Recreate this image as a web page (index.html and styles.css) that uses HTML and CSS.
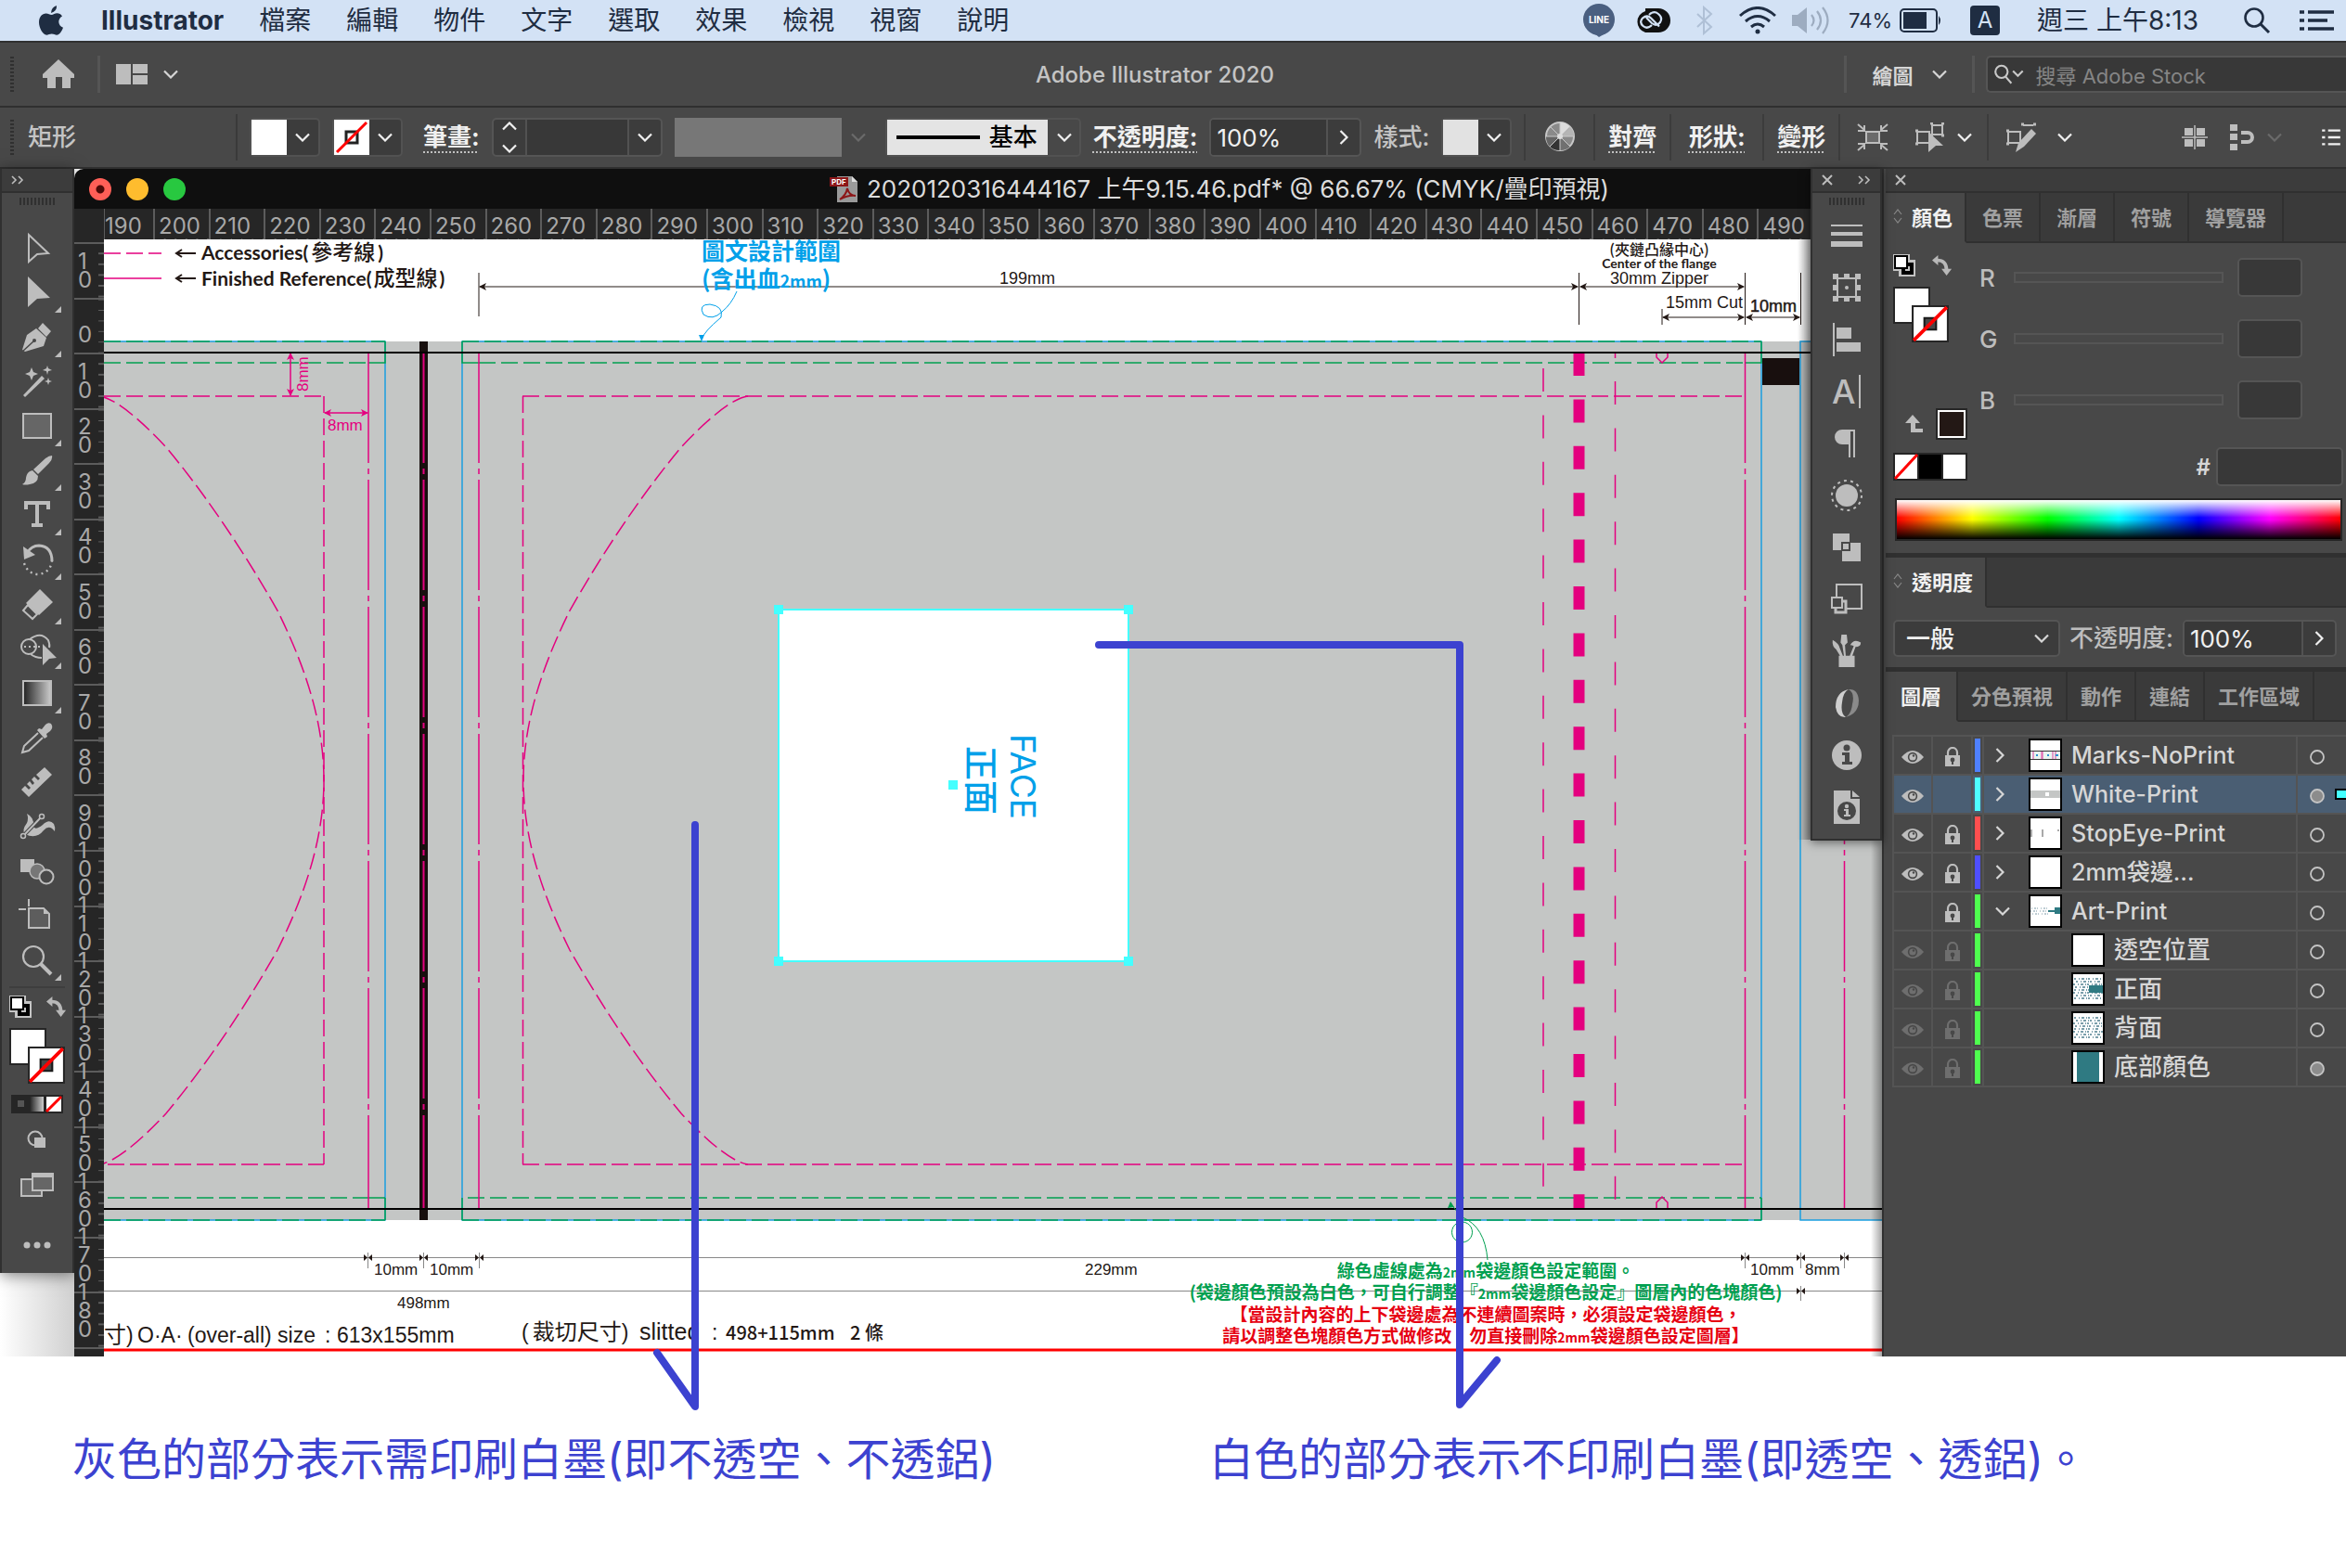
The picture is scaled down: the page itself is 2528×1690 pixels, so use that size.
FILE: index.html
```html
<!DOCTYPE html>
<html lang="zh-Hant">
<head>
  <meta charset="UTF-8">
  <title>Adobe Illustrator 2020</title>
  <link rel="stylesheet" href="styles.css">
</head>
<body>

<!-- shared icons -->
<svg class="defs" width="0" height="0" aria-hidden="true">
  <symbol id="chev" viewBox="0 0 16 10"><path d="M1 1.5l7 7 7-7" fill="none" stroke="currentColor" stroke-width="2.2"/></symbol>
  <symbol id="chev-up" viewBox="0 0 16 10"><path d="M1 8.5l7-7 7 7" fill="none" stroke="currentColor" stroke-width="2.2"/></symbol>
  <symbol id="chev-right" viewBox="0 0 10 16"><path d="M1.5 1l7 7-7 7" fill="none" stroke="currentColor" stroke-width="2.2"/></symbol>
  <symbol id="double" viewBox="0 0 14 10"><path d="M1 1l4 4-4 4M8 1l4 4-4 4" fill="none" stroke="currentColor" stroke-width="1.6"/></symbol>
  <symbol id="cross" viewBox="0 0 12 12"><path d="M1 1l10 10M11 1L1 11" fill="none" stroke="currentColor" stroke-width="2"/></symbol>
  <symbol id="updown" viewBox="0 0 10 18"><path d="M1 7l4-5 4 5M1 11l4 5 4-5" fill="none" stroke="currentColor" stroke-width="1.2"/></symbol>
  <symbol id="list" viewBox="0 0 24 22"><path d="M0 2h4M0 11h4M0 20h4M8 2h16M8 11h16M8 20h16" stroke="currentColor" stroke-width="3"/></symbol>
  <symbol id="eye" viewBox="0 0 24 16"><path d="M0 8Q12-6 24 8Q12 22 0 8z" fill="currentColor"/><circle cx="12" cy="8" r="5.2" fill="#484848"/><circle cx="12" cy="8" r="3.6" fill="currentColor"/><circle cx="13" cy="6.500" r="1.200" fill="#484848"/></symbol>
  <symbol id="lock" viewBox="0 0 18 22"><path d="M4 10V6a5 5 0 0 1 10 0v4" fill="none" stroke="currentColor" stroke-width="2.2"/><path d="M1 9h16v12H1z" fill="currentColor"/><circle cx="9" cy="14" r="2.4" fill="#484848"/><path d="M8 14h2v5H8z" fill="#484848"/></symbol>
  <symbol id="ring" viewBox="0 0 18 18"><circle cx="9" cy="9" r="7" fill="none" stroke="#c4c4c4" stroke-width="1.8"/></symbol>
  <symbol id="ring-full" viewBox="0 0 18 18"><circle cx="9" cy="9" r="7" fill="#8c8c8c" stroke="#c4c4c4" stroke-width="1.8"/></symbol>
  <symbol id="none" viewBox="0 0 38 38"><path d="M0 0h38v38H0z" fill="#262626"/><path d="M2 2h34v34H2z" fill="#fff"/><path d="M13 13h12v12H13z" fill="#484848" stroke="#1a1a1a" stroke-width="2"/><path d="M2 36L36 2" stroke="#f00" stroke-width="3.5"/></symbol>
  <symbol id="default-fill" viewBox="0 0 24 24"><path d="M0 0h18v6h6v18H6v-6H0z" fill="#c4c4c4"/><path d="M9 9h13v13H9z" fill="#000"/><path d="M13 13h5v5h-5z" fill="#c4c4c4"/><path d="M2 2h13v13H2z" fill="#fff" stroke="#000" stroke-width="2"/></symbol>
  <symbol id="swap" viewBox="0 0 24 24"><path d="M6 6q11 0 11 12" fill="none" stroke="#b8b8b8" stroke-width="4"/><path d="M0 6l7-6v12zM11 16h12l-6 8z" fill="#b8b8b8"/></symbol>
</svg>

<header class="menubar">
  <svg class="apple" viewBox="0 0 26 32"><path d="M19 0q.5 6-6 8 .2-6 6-8z" fill="#1f2d42"/><path d="M13.500 10c2-.1 3.500-1.700 6-1.700 2 0 4.400 1.200 5.500 3.200-5.500 3.200-4.500 10.200 1 12.200-1.400 4-4 8-6.800 8-2 0-3-1.200-5.400-1.200S10 31.700 8.200 31.700C4 31.700 0 23.700 0 18c0-6 3.500-9.600 7.500-9.600 2.500 0 4.300 1.600 6 1.600z" fill="#1f2d42"/></svg>
  <nav class="menus">
    <a class="app-name" href="#">Illustrator</a>
    <a href="#">檔案</a>
    <a href="#">編輯</a>
    <a href="#">物件</a>
    <a href="#">文字</a>
    <a href="#">選取</a>
    <a href="#">效果</a>
    <a href="#">檢視</a>
    <a href="#">視窗</a>
    <a href="#">說明</a>
  </nav>
  <div class="status">
    <span class="status-icon"><svg width="36" height="36" viewBox="0 0 36 36"><circle cx="18" cy="17" r="17" fill="#4a5f80"/><path d="M13 32h12l-7 4z" fill="#4a5f80"/><text x="18" y="21" text-anchor="middle" class="line-logo">LINE</text></svg></span>
    <span class="status-icon"><svg width="40" height="30" viewBox="0 0 40 30"><path d="M13 2h14a13 13 0 0 1 0 26H13A12 12 0 0 1 13 5z" fill="#111"/><g fill="none" stroke="#d3e2f5" stroke-width="2.200"><path d="M20 20q-5 5-9.500 1t-.5-8.500q5-4 9 0l9 9M17 9q5-5 10-1t2 9q-4 5-9 1l-6-6"/></g></svg></span>
    <span class="status-icon"><svg width="20" height="32" viewBox="0 0 20 32"><path d="M2 9l15 14-8 7V2l8 7L2 23" fill="none" stroke="#afc0d6" stroke-width="2"/></svg></span>
    <span class="status-icon"><svg width="42" height="30" viewBox="0 0 42 30" fill="none" stroke="#1f2d42" stroke-width="3"><path d="M2 10Q21-7 40 10M8 16q13-11 26 0M14 22q7-6 14 0"/><circle cx="21" cy="27" r="2.5" fill="#1f2d42" stroke="none"/></svg></span>
    <span class="status-icon"><svg width="42" height="30" viewBox="0 0 42 30"><path d="M1 9h6l10-8v28L7 21H1z" fill="#9dacc0"/><path d="M22 9q5 6 0 12M28 5q8 10 0 20M34 1q11 14 0 28" fill="none" stroke="#9dacc0" stroke-width="2.2"/></svg></span>
    <span class="battery">74%<svg width="46" height="26" viewBox="0 0 46 26"><rect x="1" y="1" width="39" height="24" rx="4" fill="none" stroke="#1f2d42" stroke-width="2"/><path d="M4 4h25v18H4z" fill="#1f2d42"/><path d="M42 8q4 5 0 10z" fill="#1f2d42"/></svg></span>
    <span class="input-source">A</span>
    <span class="clock">週三 上午8:13</span>
    <svg class="spotlight" width="30" height="30" viewBox="0 0 30 30"><circle cx="12" cy="12" r="9.5" fill="none" stroke="#1f2d42" stroke-width="2.6"/><path d="M19 19l9 9" stroke="#1f2d42" stroke-width="3"/></svg>
    <svg width="37" height="22" viewBox="0 0 37 22"><path d="M0 2h5M0 11h5M0 20h5M9 2h28M9 11h21M9 20h28" stroke="#1f2d42" stroke-width="3.5"/></svg>
  </div>
</header>

<div class="appbar">
  <span class="grip-v"></span>
  <button class="home" aria-label="Home"><svg width="36" height="32" viewBox="0 0 36 32"><path d="M18 0l17 16v4h-4v11h-9V19h-7v12H6V20H1v-4z" fill="#bdbdbd"/></svg></button>
  <button class="arrange" aria-label="Arrange"><svg width="34" height="22" viewBox="0 0 34 22" fill="#bdbdbd"><path d="M0 0h16v22H0zM18 0h16v10H18zM18 12h16v10H18z"/></svg><svg width="16" height="10"><use href="#chev"/></svg></button>
  <h1>Adobe Illustrator 2020</h1>
  <button class="workspace-switch">繪圖<svg width="16" height="10"><use href="#chev"/></svg></button>
  <label class="stock-search"><svg width="38" height="24" viewBox="0 0 38 24" fill="none" stroke="#c8c8c8" stroke-width="2.4"><circle cx="10" cy="9" r="7.5"/><path d="M15 15l7 8M24 8l6 6 6-6"/></svg><input type="text" placeholder="搜尋 Adobe Stock" aria-label="搜尋 Adobe Stock"></label>
</div>

<div class="controlbar">
  <div class="object-type"><span class="grip-v"></span>矩形</div>
  <div class="controls">
    <button class="swatch-drop" aria-label="Fill"><span class="chip white"></span><svg width="16" height="10"><use href="#chev"/></svg></button>
    <button class="swatch-drop" aria-label="Stroke"><svg class="chip" viewBox="0 0 38 38"><path d="M0 0h38v38H0z" fill="#fff"/><path d="M13 13h12v12H13z" fill="none" stroke="#222" stroke-width="3"/><path d="M3 35L35 3" stroke="#f00" stroke-width="3"/></svg><svg width="16" height="10"><use href="#chev"/></svg></button>
    <label class="link-label indent" for="stroke-weight">筆畫:</label>
    <div class="combo stroke-weight">
      <button class="stepper" aria-label="Step"><svg width="16" height="10"><use href="#chev-up"/></svg><svg width="16" height="10"><use href="#chev"/></svg></button>
      <input id="stroke-weight" type="text">
      <button aria-label="Weights"><svg width="16" height="10"><use href="#chev"/></svg></button>
    </div>
    <div class="width-profile"><span></span><svg width="16" height="10"><use href="#chev"/></svg></div>
    <button class="brush-drop"><span class="brush"><i></i>基本</span><svg width="16" height="10"><use href="#chev"/></svg></button>
    <label class="link-label" for="opacity">不透明度:</label>
    <div class="combo opacity">
      <input id="opacity" type="text" value="100%">
      <button aria-label="Opacity"><svg width="10" height="16"><use href="#chev-right"/></svg></button>
    </div>
    <span class="plain-label">樣式:</span>
    <button class="swatch-drop" aria-label="Style"><span class="chip grey"></span><svg width="16" height="10"><use href="#chev"/></svg></button>
  </div>
  <button class="cell wheel" aria-label="Recolor"><svg width="32" height="32" viewBox="0 0 32 32"><circle cx="16" cy="16" r="15" fill="#8a8a8a" stroke="#c8c8c8" stroke-width="2"/><path d="M16 16V1a15 15 0 0 1 11 5z" fill="#ddd"/><path d="M16 16L27 6a15 15 0 0 1 4 10z" fill="#b5b5b5"/><path d="M16 16L5 27a15 15 0 0 1-4-11z" fill="#666"/><path d="M16 16v15A15 15 0 0 1 5 27z" fill="#333"/><path d="M16 16L27 27a15 15 0 0 1-11 4z" fill="#707070"/><path d="M16 1v30M1 16h30M5 5l22 22M27 5L5 27" stroke="#c8c8c8" stroke-width="1"/><circle cx="16" cy="16" r="3" fill="#ddd"/></svg></button>
  <button class="cell link-label">對齊</button>
  <button class="cell link-label shape">形狀:</button>
  <button class="cell link-label">變形</button>
  <div class="cell icon-pair">
    <button aria-label="Isolate"><svg width="34" height="30" viewBox="0 0 34 30" fill="none" stroke="#bdbdbd" stroke-width="2"><path d="M10 9h14v12H10z" fill="#6a6a6a"/><path d="M1 1l7 6M33 1l-7 6M1 29l7-6M33 29l-7-6M1 8h7V2M33 8h-7V2M1 22h7v6M33 22h-7v6"/></svg></button>
    <button aria-label="Select similar"><svg width="34" height="32" viewBox="0 0 34 32" fill="none" stroke="#bdbdbd" stroke-width="2"><path d="M19 3h11v10H19zM3 10h13v12H3z"/><path d="M17 1h3M29 1h3M17 14h3M29 14h3M1 9h3M1 23h3" stroke-width="3"/><path d="M15 10l16 15h-8l-8 7z" fill="#bdbdbd" stroke="none"/></svg><svg width="16" height="10"><use href="#chev"/></svg></button>
  </div>
  <button class="edit-similar" aria-label="Edit similar"><svg width="34" height="32" viewBox="0 0 34 32" fill="none" stroke="#bdbdbd" stroke-width="2"><path d="M19 3h11M3 10h13v12H3z"/><path d="M17 2h3M30 2h3M1 9h3M1 23h3" stroke-width="3"/><path d="M28 7l5 5-13 14-9 6 3-10z" fill="#bdbdbd" stroke="none"/></svg><svg width="16" height="10"><use href="#chev"/></svg></button>
  <div class="right-tools">
    <button aria-label="Grid"><svg width="28" height="26" viewBox="0 0 28 26"><path d="M3 3h9v8H3zM16 3h9v8h-9zM3 15h9v8H3zM16 15h9v8h-9z" fill="#bdbdbd"/><path d="M14 0v26M0 13h28" stroke="#bdbdbd" stroke-width="1.5"/></svg></button>
    <button aria-label="Snap"><svg width="28" height="28" viewBox="0 0 28 28"><path d="M0 0h8v7H0zM0 10h8v7H0zM0 21h8v7H0z" fill="#bdbdbd"/><path d="M12 9h7a5 5 0 0 1 0 10h-7" fill="none" stroke="#bdbdbd" stroke-width="4"/></svg><svg class="dim" width="16" height="10"><use href="#chev"/></svg></button>
    <button aria-label="Options"><svg width="24" height="18"><use href="#list"/></svg></button>
  </div>
</div>

<main class="workspace">
  <aside class="tools-col">
    <div class="tools">
      <div class="panel-head"><svg width="14" height="10"><use href="#double"/></svg></div>
      <span class="grip-h"></span>
      <div class="tool-list">
        <button aria-label="Selection"><svg viewBox="0 0 40 36"><path d="M11 4l21 20-12 1-9 8z" fill="none" stroke="#bdbdbd" stroke-width="2"/></svg></button>
        <button class="more" aria-label="Direct selection"><svg viewBox="0 0 40 36"><path d="M10 1l24 23-14 1-10 9z" fill="#bdbdbd"/></svg></button>
        <button class="more" aria-label="Pen"><svg viewBox="0 0 40 36"><path d="M26 3l9 9-5 6-9-9zM19 9l11 10-3 9-20 6-3-2L9 16z" fill="#bdbdbd"/><path d="M4 34l12-11" stroke="#484848" stroke-width="1.5"/><circle cx="17" cy="22" r="2" fill="#484848"/></svg></button>
        <button aria-label="Magic wand"><svg viewBox="0 0 40 36"><path d="M5 33l2 2 21-20-3-3z" fill="#bdbdbd"/><path d="M14 3l2 5 5 2-5 2-2 5-2-5-5-2 5-2zM31 1l1 3 4 2-4 1-1 4-1-4-4-1 4-2zM32 14l1 3 3 1-3 1-1 3-1-3-3-1 3-1z" fill="#bdbdbd"/></svg></button>
        <button class="more" aria-label="Rectangle"><svg viewBox="0 0 40 36"><path d="M5 5h30v26H5z" fill="#666" stroke="#bdbdbd" stroke-width="2"/></svg></button>
        <button class="more" aria-label="Brush"><svg viewBox="0 0 40 36"><path d="M36 2q1 4-3 8L21 22l-5-5L29 5q4-3 7-3zM15 18l6 6q0 8-9 9-5 1-8 0 4-2 4-7 1-7 7-8z" fill="#bdbdbd"/></svg></button>
        <button class="more" aria-label="Type"><svg viewBox="0 0 40 36"><path d="M6 3h28v9h-4V7h-8v20h4v4H14v-4h4V7h-8v5H6z" fill="#bdbdbd"/></svg></button>
        <button class="more" aria-label="Rotate"><svg viewBox="0 0 40 36"><path d="M9 11Q14 3 22 3q14 1 14 17" fill="none" stroke="#bdbdbd" stroke-width="3"/><path d="M5 4l1 14 12-5z" fill="#bdbdbd"/><path d="M6 22q4 12 16 12 12-2 14-14" fill="none" stroke="#bdbdbd" stroke-width="2.4" stroke-dasharray="2 4"/></svg></button>
        <button class="more" aria-label="Eraser"><svg viewBox="0 0 40 36"><path d="M23 2l14 14-15 14L8 17z" fill="#bdbdbd"/><path d="M10 19l10 10-5 5-10-9z" fill="none" stroke="#bdbdbd" stroke-width="2"/></svg></button>
        <button class="more" aria-label="Shape builder"><svg viewBox="0 0 40 36" fill="none" stroke="#bdbdbd" stroke-width="2"><circle cx="11" cy="16" r="8"/><path d="M12 8q12-9 20 1 2 5 1 8M13 24q5 4 12 4"/><path d="M6 16h24" stroke-dasharray="2 3"/><path d="M26 13l15 15-8 1-7 7z" fill="#bdbdbd" stroke="none"/></svg></button>
        <button class="more" aria-label="Gradient"><svg viewBox="0 0 40 36"><defs><linearGradient id="gr"><stop offset="0" stop-color="#222"/><stop offset="1" stop-color="#ccc"/></linearGradient></defs><path d="M5 5h30v26H5z" fill="url(#gr)" stroke="#bdbdbd" stroke-width="2"/></svg></button>
        <button aria-label="Eyedropper"><svg viewBox="0 0 40 36"><path d="M35 3q3 4-1 8l-4 3 1 3-3 2-8-9 2-2 3 1 4-5q3-3 6-1z" fill="#bdbdbd"/><path d="M21 13L6 27l-2 7 7-2 15-14" fill="none" stroke="#bdbdbd" stroke-width="2"/></svg></button>
        <button aria-label="Measure"><svg viewBox="0 0 40 36"><path d="M28 2l8 8-25 24-8-8 4-4 4 4 2-2-4-4 3-3 3 4 2-2-3-4 3-3 4 4 2-2-4-4z" fill="#bdbdbd"/></svg></button>
        <button aria-label="Puppet"><svg viewBox="0 0 40 36"><path d="M9 4q8 4 7 13 1 6 10-1 7-7 12-1 2 4 1 8-6-8-12-1-8 10-20 4-4-4 2-12 2-5 0-10z" fill="#bdbdbd"/><path d="M5 28L25 7" stroke="#484848" stroke-width="4"/><path d="M5 28L25 7" stroke="#bdbdbd" stroke-width="2"/><circle cx="25" cy="7" r="2.5" fill="#484848" stroke="#bdbdbd" stroke-width="1.5"/><circle cx="5" cy="28" r="2.5" fill="#484848" stroke="#bdbdbd" stroke-width="1.5"/></svg></button>
        <button aria-label="Blend"><svg viewBox="0 0 40 36"><path d="M2 5h15v14H2z" fill="#bdbdbd"/><circle cx="20" cy="18" r="8" fill="#777" stroke="#bdbdbd" stroke-width="1.5"/><circle cx="30" cy="24" r="7.5" fill="#484848" stroke="#bdbdbd" stroke-width="2"/></svg></button>
        <button aria-label="Artboard"><svg viewBox="0 0 40 36"><path d="M11 0v8M0 11h8" stroke="#bdbdbd" stroke-width="2"/><path d="M11 10h16l6 6v15H11z" fill="#5d5d5d" stroke="#bdbdbd" stroke-width="2"/><path d="M27 10l6 6h-6z" fill="#bdbdbd"/></svg></button>
        <button class="more" aria-label="Zoom"><svg viewBox="0 0 40 36"><circle cx="16" cy="14" r="11" fill="none" stroke="#bdbdbd" stroke-width="2.2"/><path d="M24 22l11 11" stroke="#bdbdbd" stroke-width="4"/></svg></button>
      </div>
      <div class="fill-tools">
        <div class="swap-row"><svg width="24" height="24"><use href="#default-fill"/></svg><svg width="22" height="24"><use href="#swap"/></svg></div>
        <div class="fill-stroke"><span class="fill-box"></span><svg class="stroke-box"><use href="#none"/></svg></div>
        <svg class="color-modes" width="56" height="20" viewBox="0 0 56 20"><path d="M0 0h56v20H0z" fill="#262626"/><path d="M7 6h7v7H7z" fill="#555"/><path d="M20 2h15v16H20z" fill="url(#gr)"/><path d="M38 2h16v16H38z" fill="#fff"/><path d="M38 18L54 2" stroke="#f00" stroke-width="3"/></svg>
        <button aria-label="Draw mode"><svg width="22" height="20" viewBox="0 0 22 20"><circle cx="9" cy="9" r="7.5" fill="none" stroke="#bdbdbd" stroke-width="2"/><path d="M8 8h12v11H8z" fill="#bdbdbd"/></svg></button>
        <button class="screen" aria-label="Screen mode"><svg width="36" height="26" viewBox="0 0 36 26" fill="#666" stroke="#bdbdbd" stroke-width="2"><path d="M1 7h22v18H1z"/><path d="M13 1h22v18H13z"/><path d="M13 3h22" stroke-width="4"/></svg></button>
        <button class="dots" aria-label="Edit toolbar"><svg width="30" height="8" viewBox="0 0 30 8" fill="#bdbdbd"><circle cx="4" cy="4" r="3.5"/><circle cx="15" cy="4" r="3.5"/><circle cx="26" cy="4" r="3.5"/></svg></button>
      </div>
    </div>
  </aside>

  <section class="document">
    <div class="doc-title">
      <div class="lights"><i class="close"></i><i class="min"></i><i class="max"></i></div>
      <h2><svg width="30" height="28" viewBox="0 0 30 28"><path d="M8 0h16l6 6v22H8z" fill="#9a9a9a"/><path d="M24 0l6 6h-6z" fill="#ddd"/><path d="M0 1h20v10H0z" fill="#8c1618"/><text x="2" y="9" class="pdf-tag">PDF</text><path d="M11 25q7-5 8-12 2 8 9 8-8-1-17 4z" fill="none" stroke="#8c1618" stroke-width="2"/></svg>2020120316444167 上午9.15.46.pdf* @ 66.67% (CMYK/疊印預視)</h2>
    </div>
    <div class="ruler-row">
      <div class="ruler-corner"></div>
      <div class="ruler-x" id="ruler-x"></div>
    </div>
    <div class="canvas-row">
      <div class="ruler-y" id="ruler-y"></div>
      <svg class="canvas" viewBox="112 258 1916 1204">
        <defs>
          <linearGradient id="shade" x1="0" x2="1"><stop offset="0" stop-color="#000" stop-opacity="0"/><stop offset="1" stop-color="#000" stop-opacity=".35"/></linearGradient>
          <marker id="arr" viewBox="0 0 8 8" refX="7" refY="4" markerWidth="8" markerHeight="8" markerUnits="userSpaceOnUse" orient="auto-start-reverse"><path d="M0 0l8 4-8 4 2-4z" fill="context-stroke"/></marker>
          <path id="pouch" d="M806 427C790 429 764 450 734 482C690 535 650 595 614 658C590 707 564 770 564 841C564 912 590 975 614 1024C650 1087 690 1147 734 1200C764 1232 790 1253 806 1255"/>
        </defs>
        <rect x="112" y="258" width="1916" height="1204" fill="#fff"/>
        <rect x="112" y="368" width="1916" height="947" fill="#c4c6c5"/>

        <!-- legend -->
        <g class="pink">
          <path d="M112 273h62" stroke-dasharray="18 6"/>
          <path d="M112 300h62"/>
        </g>
        <g class="ink"><path d="M190 273h21M196 269l-6 4 6 4M190 300h21M196 296l-6 4 6 4" class="thick"/></g>
        <text class="futura" x="217" y="280">Accessories(<tspan class="cjk20" dx="3">參考線</tspan><tspan dx="3">)</tspan></text>
        <text class="futura" x="217" y="308">Finished Reference(<tspan class="cjk20" dx="2">成型線</tspan><tspan dx="2">)</tspan></text>

        <!-- bleed outlines -->
        <g class="blue">
          <path d="M112 368H415V1315H112M498 368H1898V1315H498zM2028 368H1940V1315H2028"/>
        </g>
        <g class="green">
          <path d="M112 368H415M498 368H1898M112 1315H415M498 1315H1898" stroke-dasharray="18 6"/>
          <path d="M112 391H397M516 391H1880M116 1291H397M504 1291H1898" stroke-dasharray="18 6"/>
          <path d="M397 391h18v-23M498 368v23h18M1880 391h18v-23M415 1291v24M1898 1291v24M498 1291v24M397 1291h18"/>
        </g>
        <path d="M452 368h9v947h-9z" fill="#180f0e"/>
        <path d="M1899 386h40v29h-40z" fill="#180f0e"/>

        <!-- fold and seal lines -->
        <g class="pink">
          <path d="M397 380V1302M516 380V1302M1880.5 380V1302M1987.5 380V1302" stroke-dasharray="119 6 6 6"/>
          <path d="M456.5 380V1302" stroke-width="2" stroke-dasharray="119 6 6 6"/>
          <path d="M349 427V1255M112 427H349M116 1255H349M563.5 427V1255M563 427H1880M563 1255H1880" stroke-dasharray="18 6"/>
          <use href="#pouch" stroke-dasharray="18 6"/>
          <use href="#pouch" transform="translate(913 0) scale(-1 1)" stroke-dasharray="18 6"/>
          <path d="M1701.5 380V1302" stroke-width="12" stroke-dasharray="25 25.4"/>
          <path d="M1663 397V1282" stroke-dasharray="25 25.4"/>
          <path d="M1740.5 380v6M1740.5 411V1295" stroke-dasharray="25 25.4"/>
          <path d="M1785 380v5l6 6 6-6v-5M1785 1302v-6l6-6 6 6v6"/>
          <path d="M313 381V426" marker-start="url(#arr)" marker-end="url(#arr)"/>
          <path d="M350 445H396" marker-start="url(#arr)" marker-end="url(#arr)"/>
        </g>
        <path d="M112 380H2028M112 1303H2028" stroke="#000" stroke-width="2"/>
        <text class="dim-pink" x="353" y="464">8mm</text>
        <text class="dim-pink" transform="translate(332 422) rotate(-90)">8mm</text>

        <!-- dimensions above -->
        <g class="ink">
          <path d="M516 294v47M1701.5 294v56M1880.5 294v56M1940.5 294v56M1791 333v17"/>
          <path d="M517 309H1700" marker-start="url(#arr)" marker-end="url(#arr)"/>
          <path d="M1703 309H1879" marker-start="url(#arr)" marker-end="url(#arr)"/>
          <path d="M1792 342H1879" marker-start="url(#arr)" marker-end="url(#arr)"/>
          <path d="M1882 342H1939" marker-start="url(#arr)" marker-end="url(#arr)"/>
        </g>
        <text class="dim-text" x="1077" y="306">199mm</text>
        <text class="dim-text" x="1735" y="306">30mm Zipper</text>
        <text class="dim-text" x="1795" y="332">15mm Cut</text>
        <text class="dim-text strong" x="1886" y="336">10mm</text>
        <text class="flange-cjk" x="1788" y="275" text-anchor="middle">(夾鏈凸緣中心)</text>
        <text class="flange" x="1788" y="289" text-anchor="middle">Center of the flange</text>

        <text class="bleed" x="756" y="280">圖文設計範圍</text>
        <text class="bleed" x="756" y="310">(含出血<tspan class="bleed-mm">2mm</tspan>)</text>
        <path class="curl-blue" d="M794 314Q788 328 778 336Q768 346 758 339Q752 328 765 328Q780 330 777 342Q758 358 756 366"/>
        <path d="M753 361h6l-3 7z" fill="#00a0e9"/>

        <!-- selected white area -->
        <rect x="839" y="657" width="377" height="379" fill="#fff" stroke="#44ffff" stroke-width="2"/>
        <path d="M834 652h10v10h-10zM1211 652h10v10h-10zM834 1031h10v10h-10zM1211 1031h10v10h-10zM1022 841h10v10h-10z" fill="#44ffff"/>
        <text class="face" transform="translate(1089 791) rotate(90)">FACE</text>
        <text class="face-cjk" transform="translate(1043 804) rotate(90)">正面</text>

        <!-- dimensions below -->
        <g class="ink">
          <path class="thin" d="M112 1355.5H2028M112 1391.5H2028M396.5 1350v17M456.5 1350v17M516.5 1350v17M1880.5 1350v17M1940.5 1350v17M1987.5 1350v17M1940.5 1386v16"/>
          <path class="solid" d="M392 1352l4 3.5-4 3.5zM401 1352l-4 3.5 4 3.5zM452 1352l4 3.5-4 3.5zM461 1352l-4 3.5 4 3.5zM512 1352l4 3.5-4 3.5zM521 1352l-4 3.5 4 3.5zM1876 1352l4 3.5-4 3.5zM1885 1352l-4 3.5 4 3.5zM1936 1352l4 3.5-4 3.5zM1945 1352l-4 3.5 4 3.5zM1983 1352l4 3.5-4 3.5zM1992 1352l-4 3.5 4 3.5zM1936 1388l4 3.5-4 3.5zM1945 1388l-4 3.5 4 3.5z"/>
        </g>
        <text class="dim-small" x="403" y="1374">10mm</text>
        <text class="dim-small" x="463" y="1374">10mm</text>
        <text class="dim-small" x="428" y="1410">498mm</text>
        <text class="dim-small" x="1169" y="1374">229mm</text>
        <text class="dim-small" x="1886" y="1374">10mm</text>
        <text class="dim-small" x="1945" y="1374">8mm</text>
        <text class="size-text" x="112" y="1447"><tspan class="cjk24">寸</tspan>)</text>
        <text class="size-text" x="148" y="1447">O·A·</text>
        <text class="size-text" x="202" y="1447">(over-all) size</text>
        <text class="size-text" x="350" y="1447">:</text>
        <text class="size-text" x="363" y="1447">613x155mm</text>
        <text class="size-text" x="562" y="1444">(<tspan class="cjk24" dx="4">裁切尺寸</tspan>)</text>
        <text class="slitted" x="689" y="1444">slitted</text>
        <text class="size-text" x="767" y="1444">:</text>
        <text class="slit-size" x="782" y="1444">498+115mm</text>
        <text class="slit-size" x="916" y="1444">2 條</text>

        <path class="curl-green" d="M1603 1358Q1600 1322 1576 1312Q1566 1302 1563 1296M1575 1317a11 11 0 1 0 1 0"/>
        <path d="M1560 1302l3-7 4 6z" fill="#00a050"/>
        <text class="hint green-text" x="1601" y="1377" text-anchor="middle">綠色虛線處為<tspan class="hint-mm">2mm</tspan>袋邊顏色設定範圍。</text>
        <text class="hint green-text" x="1601" y="1400" text-anchor="middle">(袋邊顏色預設為白色，可自行調整『<tspan class="hint-mm">2mm</tspan>袋邊顏色設定』圖層內的色塊顏色)</text>
        <text class="hint red-text" x="1601" y="1424" text-anchor="middle">【當設計內容的上下袋邊處為不連續圖案時，必須設定袋邊顏色，</text>
        <text class="hint red-text" x="1601" y="1447" text-anchor="middle">請以調整色塊顏色方式做修改　勿直接刪除<tspan class="hint-mm">2mm</tspan>袋邊顏色設定圖層】</text>
        <path d="M112 1455H2028" stroke="#f00" stroke-width="3"/>
        <rect x="1937" y="258" width="14" height="647" fill="url(#shade)"/>
        <rect x="2016" y="905" width="12" height="557" fill="url(#shade)"/>
      </svg>
    </div>

    <aside class="dock">
      <div class="panel-head"><svg width="12" height="12"><use href="#cross"/></svg><svg width="14" height="10"><use href="#double"/></svg></div>
      <span class="grip-h"></span>
      <button aria-label="Stroke"><svg viewBox="0 0 36 36"><path d="M1 14h34v4H1zM1 24h34v6H1zM1 6h34v2H1z" fill="#bdbdbd"/></svg></button>
      <button aria-label="Transform"><svg viewBox="0 0 36 36"><path d="M8 8h20v20H8z" fill="none" stroke="#bdbdbd" stroke-width="2"/><path d="M3 3h6v6H3zM15 3h6v6h-6zM27 3h6v6h-6zM3 15h6v6H3zM27 15h6v6h-6zM3 27h6v6H3zM15 27h6v6h-6zM27 27h6v6h-6z" fill="#bdbdbd"/><circle cx="18" cy="18" r="2" fill="#bdbdbd"/></svg></button>
      <button aria-label="Align"><svg viewBox="0 0 36 36" fill="#bdbdbd"><path d="M3 0h2v36H3zM7 5h16v12H7zM7 21h26v10H7z"/></svg></button>
      <button aria-label="Character"><svg viewBox="0 0 36 36"><text x="2" y="31" class="glyph-a">A</text><path d="M32 0v36" stroke="#bdbdbd" stroke-width="2"/></svg></button>
      <button aria-label="Paragraph"><svg viewBox="0 0 36 36"><path d="M27 3v30h-2V5h-3v28h-2V19h-7a8 8 0 0 1 0-16z" fill="#bdbdbd"/></svg></button>
      <button aria-label="Appearance"><svg viewBox="0 0 36 36"><circle cx="18" cy="18" r="12" fill="#bdbdbd"/><circle cx="18" cy="18" r="16" fill="none" stroke="#bdbdbd" stroke-width="2" stroke-dasharray="3 4.18"/></svg></button>
      <button aria-label="Pathfinder"><svg viewBox="0 0 36 36"><path d="M3 3h18v18H3zM13 13h20v20H13z" fill="#bdbdbd"/><path d="M13 13h8v8h-8z" fill="#bdbdbd" stroke="#484848" stroke-width="2"/></svg></button>
      <button aria-label="Asset export"><svg viewBox="0 0 36 36" fill="none" stroke="#bdbdbd" stroke-width="2"><path d="M7 16V2h27v26H18"/><path d="M2 16h11v11H2z"/><path d="M13 20h4v12H6v-5" stroke-width="3"/></svg></button>
      <button aria-label="Brushes"><svg viewBox="0 0 36 38" fill="#bdbdbd"><path d="M9 24h18v13H9zM12 0h6l1 9-3 3 1 13h-2l-2-13-2-3zM2 6q7 4 8 9l4 10h-3l-5-8q-5-4-4-11zM21 25l5-12q-2-1-4-1 4-8 12-3 0 5-6 5l-4 11z"/></svg></button>
      <button aria-label="Opacity"><svg viewBox="0 0 36 36"><path d="M20 3Q6 6 6 22q2 12 11 11-6-4-4-16Q14 6 20 3z" fill="#cfcfcf"/><path d="M17 33q14-4 14-18Q30 2 20 3q7 4 4 16-1 10-7 14z" fill="#8a8a8a"/></svg></button>
      <button aria-label="Info"><svg viewBox="0 0 36 36"><circle cx="18" cy="18" r="16" fill="#bdbdbd"/><circle cx="18" cy="10" r="3.5" fill="#484848"/><path d="M13 15h8v10h3v3H13v-3h3v-7h-3z" fill="#484848"/></svg></button>
      <button aria-label="Document info"><svg viewBox="0 0 36 36"><path d="M4 0h18v9h10v27H4z" fill="#bdbdbd"/><path d="M24 0l8 7h-8z" fill="#bdbdbd"/><circle cx="18" cy="22" r="10" fill="#484848"/><circle cx="18" cy="17" r="2.2" fill="#bdbdbd"/><path d="M15 20h5v6h2v2h-7v-2h2v-4h-2z" fill="#bdbdbd"/></svg></button>
    </aside>
  </section>

  <aside class="panels">
    <div class="panel-head"><svg width="12" height="12"><use href="#cross"/></svg></div>

    <section class="panel color-panel">
      <div class="tabs">
        <button class="active"><svg width="10" height="18"><use href="#updown"/></svg>顏色</button>
        <button>色票</button><button>漸層</button><button>符號</button><button>導覽器</button>
      </div>
      <div class="color-body">
        <div class="color-left">
          <div class="swap-row"><svg width="24" height="24"><use href="#default-fill"/></svg><svg width="22" height="24"><use href="#swap"/></svg></div>
          <div class="fill-stroke"><span class="fill-box"></span><svg class="stroke-box"><use href="#none"/></svg></div>
          <div class="last-color"><svg width="20" height="20" viewBox="0 0 20 20"><path d="M8 0l8 9H11v6h8v4H6V9H0z" fill="#bdbdbd"/></svg><span></span></div>
        </div>
        <div class="sliders">
          <label for="r">R</label><input type="range" id="r" disabled><input type="text" aria-label="R value">
          <label for="g">G</label><input type="range" id="g" disabled><input type="text" aria-label="G value">
          <label for="b">B</label><input type="range" id="b" disabled><input type="text" aria-label="B value">
        </div>
      </div>
      <div class="hex-row">
        <svg width="80" height="30" viewBox="0 0 80 30"><path d="M0 0h80v30H0z" fill="#262626"/><path d="M2 2h24v26H2zM54 2h24v26H54z" fill="#fff"/><path d="M28 2h24v26H28z" fill="#000"/><path d="M2 28L26 2" stroke="#f00" stroke-width="3"/></svg>
        <label for="hex">#</label><input type="text" id="hex">
      </div>
      <div class="spectrum"></div>
    </section>

    <section class="panel">
      <div class="tabs">
        <button class="active"><svg width="10" height="18"><use href="#updown"/></svg>透明度</button>
      </div>
      <div class="blend-row">
        <div class="select-wrap"><select aria-label="Blend mode"><option>一般</option></select><svg width="16" height="10"><use href="#chev"/></svg></div>
        <label for="opacity2">不透明度:</label>
        <div class="combo"><input id="opacity2" type="text" value="100%"><button aria-label="Opacity"><svg width="10" height="16"><use href="#chev-right"/></svg></button></div>
      </div>
    </section>

    <section class="panel layers-panel">
      <div class="tabs tight">
        <button class="active">圖層</button><button>分色預視</button><button>動作</button><button>連結</button><button>工作區域</button>
      </div>
      <table class="layers">
        <tr>
          <td><svg class="eye"><use href="#eye"/></svg></td><td><svg class="lock"><use href="#lock"/></svg></td><td class="bar blue-bar"></td>
          <td><div class="layer-name"><svg width="10" height="16"><use href="#chev-right"/></svg><svg class="thumb" viewBox="0 0 32 32"><path d="M0 12h32v9H0z" fill="#e8f5f0"/><path d="M0 11.5h32M0 20.5h32" stroke="#333"/><path d="M3 12v8M12 12v8M13 12v8M24 12v8M27 12v8" stroke="#e040a0"/><path d="M6 16h2M18 16h2M27 16h3" stroke="#2a90d0" stroke-width="2"/></svg>Marks-NoPrint</div></td>
          <td><svg class="ring"><use href="#ring"/></svg></td>
        </tr>
        <tr class="selected">
          <td><svg class="eye"><use href="#eye"/></svg></td><td></td><td class="bar cyan-bar"></td>
          <td><div class="layer-name"><svg width="10" height="16"><use href="#chev-right"/></svg><svg class="thumb" viewBox="0 0 32 32"><path d="M0 12h32v8H0z" fill="#c4c6c5"/><path d="M16 14h4v4h-4z" fill="#fff"/></svg>White-Print</div></td>
          <td><svg class="ring"><use href="#ring-full"/></svg><i class="sel-mark"></i></td>
        </tr>
        <tr>
          <td><svg class="eye"><use href="#eye"/></svg></td><td><svg class="lock"><use href="#lock"/></svg></td><td class="bar red-bar"></td>
          <td><div class="layer-name"><svg width="10" height="16"><use href="#chev-right"/></svg><svg class="thumb" viewBox="0 0 32 32"><path d="M1 12v8M13 12v8M30 12v2" stroke="#555"/></svg>StopEye-Print</div></td>
          <td><svg class="ring"><use href="#ring"/></svg></td>
        </tr>
        <tr>
          <td><svg class="eye"><use href="#eye"/></svg></td><td><svg class="lock"><use href="#lock"/></svg></td><td class="bar indigo-bar"></td>
          <td><div class="layer-name"><svg width="10" height="16"><use href="#chev-right"/></svg><svg class="thumb"></svg>2mm袋邊…</div></td>
          <td><svg class="ring"><use href="#ring"/></svg></td>
        </tr>
        <tr>
          <td></td><td><svg class="lock"><use href="#lock"/></svg></td><td class="bar green-bar"></td>
          <td><div class="layer-name open"><svg width="16" height="10"><use href="#chev"/></svg><svg class="thumb" viewBox="0 0 32 32"><path d="M1 13h18M0 16h20M2 19h17" stroke="#7d9aa8" stroke-dasharray="1 2 2 1 1 3"/><path d="M19 15h7v-3h6v7h-6v-2h-7z" fill="#2f7a82"/></svg>Art-Print</div></td>
          <td><svg class="ring"><use href="#ring"/></svg></td>
        </tr>
        <tr class="child">
          <td><svg class="eye"><use href="#eye"/></svg></td><td><svg class="lock"><use href="#lock"/></svg></td><td class="bar green-bar"></td>
          <td><div class="layer-name"><svg class="thumb"></svg>透空位置</div></td>
          <td><svg class="ring"><use href="#ring"/></svg></td>
        </tr>
        <tr class="child">
          <td><svg class="eye"><use href="#eye"/></svg></td><td><svg class="lock"><use href="#lock"/></svg></td><td class="bar green-bar"></td>
          <td><div class="layer-name"><svg class="thumb" viewBox="0 0 32 32"><path d="M1 5h30M3 8h28M0 11h31M2 14h29M1 17h28M0 20h32M3 23h28M1 26h29" stroke="#4f7f8f" stroke-dasharray="2 3 1 2 3 2 1 1" stroke-width="1.500"/><path d="M17 12h15v8H17z" fill="#2f7a82"/></svg>正面</div></td>
          <td><svg class="ring"><use href="#ring"/></svg></td>
        </tr>
        <tr class="child">
          <td><svg class="eye"><use href="#eye"/></svg></td><td><svg class="lock"><use href="#lock"/></svg></td><td class="bar green-bar"></td>
          <td><div class="layer-name"><svg class="thumb" viewBox="0 0 32 32"><path d="M1 5h30M3 8h28M0 11h31M2 14h29M1 17h28M0 20h32M3 23h28M1 26h29" stroke="#4f7f8f" stroke-dasharray="2 3 1 2 3 2 1 1" stroke-width="1.500"/></svg>背面</div></td>
          <td><svg class="ring"><use href="#ring"/></svg></td>
        </tr>
        <tr class="child">
          <td><svg class="eye"><use href="#eye"/></svg></td><td><svg class="lock"><use href="#lock"/></svg></td><td class="bar green-bar"></td>
          <td><div class="layer-name"><svg class="thumb" viewBox="0 0 32 32"><path d="M4 0h24v32H4z" fill="#2f7a82"/></svg>底部顏色</div></td>
          <td><svg class="ring"><use href="#ring-full"/></svg></td>
        </tr>
      </table>
    </section>
  </aside>

  <!-- pen callouts drawn over the artwork -->
  <svg class="callouts" viewBox="0 0 2528 1400" fill="none" stroke="#3c42d0" stroke-width="8" stroke-linecap="round" stroke-linejoin="round">
    <path d="M1184 513H1573V1332L1613 1284"/>
    <path d="M749 707V1334L708 1276"/>
  </svg>
</main>

<footer class="notes">
  <p>灰色的部分表示需印刷白墨(即不透空、不透鋁)</p>
  <p>白色的部分表示不印刷白墨(即透空、透鋁)。</p>
</footer>

<script>
  // ruler labels, in mm
  var rulerX = document.getElementById('ruler-x');
  for (var mm = 190; mm <= 490; mm += 10) {
    rulerX.insertAdjacentHTML('beforeend', '<span>' + mm + '</span>');
  }

  var rulerY = document.getElementById('ruler-y');
  for (var row = -10; row <= 180; row += 10) {
    rulerY.insertAdjacentHTML('beforeend', '<span><b>' + Math.abs(row) + '</b></span>');
  }
  rulerY.insertAdjacentHTML('beforeend', '<span class="stub"></span>');
</script>
</body>
</html>
```
FILE: styles.css
```css
* {
  box-sizing: border-box;
}
body {
  margin: 0;
  background-color: #fff;
  font-family: Inter, "Noto Sans CJK TC", sans-serif;
  font-size: 24px;
  color: #d6d6d6;
}
button, input, select {
  font: inherit;
  color: inherit;
  background: none;
  border: 0;
  padding: 0;
  margin: 0;
}
a {
  color: inherit;
  text-decoration: none;
}
.defs {
  position: absolute;
}

/* mac menu bar */
.menubar {
  display: flex;
  align-items: center;
  height: 44px;
  padding: 0 13px 0 42px;
  background-color: #d3e2f5;
  color: #1f2d42;
  font-size: 28px;
}
.apple {
  width: 26px;
  height: 32px;
}
.menus {
  display: flex;
  align-items: center;
  gap: 38px;
  margin-left: 41px;
  line-height: 40px;
}
.app-name {
  font-weight: 700;
}
.status {
  display: flex;
  align-items: center;
  margin-left: auto;
}
.status-icon {
  width: 57px;
  display: flex;
  justify-content: center;
}
.line-logo {
  font-size: 10px;
  font-weight: 700;
  fill: #fff;
}
.battery {
  display: flex;
  align-items: center;
  gap: 8px;
  margin-left: 13px;
  font-size: 22px;
}
.input-source {
  width: 32px;
  height: 32px;
  margin: 0 40px 0 30px;
  border-radius: 4px;
  background-color: #1f2d42;
  color: #d3e2f5;
  font-size: 24px;
  line-height: 32px;
  text-align: center;
}
.clock {
  font-size: 28px;
  line-height: 40px;
}
.spotlight {
  margin: 0 31px 0 48px;
}

/* application bar */
.appbar {
  display: flex;
  align-items: center;
  height: 72px;
  border-top: 2px solid #303030;
  border-bottom: 2px solid #303030;
  background-color: #484848;
}
.grip-v {
  width: 4px;
  height: 38px;
  margin-left: 11px;
  background: repeating-linear-gradient(#303030 0 2px, transparent 2px 4px);
}
.home {
  height: 40px;
  padding: 0 24px 0 30px;
  border-right: 3px solid #555;
}
.home svg {
  margin-top: 4px;
}
.arrange {
  display: flex;
  align-items: center;
  gap: 17px;
  margin-left: 17px;
}
.appbar h1 {
  flex: 1;
  margin: 0;
  padding-left: 310px;
  text-align: center;
  font-size: 24px;
  font-weight: 500;
  color: #c4c4c4;
}
.workspace-switch {
  display: flex;
  align-items: center;
  justify-content: center;
  gap: 20px;
  width: 141px;
  height: 40px;
  border-left: 3px solid #555;
  border-right: 3px solid #555;
  font-size: 22px;
  font-weight: 700;
}
.stock-search {
  display: flex;
  align-items: center;
  gap: 12px;
  width: 388px;
  height: 40px;
  margin-left: 12px;
  padding-left: 6px;
  border: 2px solid #555;
  border-right: 0;
  border-radius: 5px 0 0 5px;
  background-color: #383838;
}
.stock-search input {
  width: 100%;
  padding-top: 4px;
  font-size: 22px;
}
.stock-search input::placeholder {
  color: #858585;
}

/* control bar */
.controlbar {
  display: flex;
  align-items: center;
  height: 66px;
  border-bottom: 2px solid #303030;
  background-color: #484848;
  color: #f0f0f0;
}
.controlbar svg {
  flex-shrink: 0;
}
.object-type {
  display: flex;
  align-items: center;
  gap: 15px;
  width: 256px;
  height: 50px;
  border-right: 2px solid #3a3a3a;
  font-size: 26px;
  font-weight: 500;
  line-height: 32px;
  color: #c4c4c4;
}
.controls {
  display: flex;
  align-items: center;
  gap: 13px;
  padding: 0 13px;
}
.swatch-drop {
  display: flex;
  align-items: center;
  width: 76px;
  height: 42px;
  border: 2px solid #525252;
  border-radius: 5px;
  background-color: #3c3c3c;
}
.swatch-drop svg:last-child {
  margin: 0 auto;
}
.chip {
  width: 38px;
  height: 38px;
}
.white {
  background-color: #fff;
}
.grey {
  background-color: #e2e2e2;
}
.link-label {
  font-size: 26px;
  font-weight: 700;
  line-height: 32px;
  text-decoration: underline dotted 2px #c0c0c0;
  text-underline-offset: 6px;
}
.indent {
  margin-left: 9px;
}
.plain-label {
  font-size: 26px;
  font-weight: 500;
  line-height: 32px;
  color: #c4c4c4;
}
.combo {
  display: flex;
  height: 42px;
  border: 2px solid #555;
  border-radius: 5px;
  background-color: #3c3c3c;
  overflow: hidden;
}
.combo input {
  flex: 1;
  min-width: 0;
  padding-left: 6px;
  background-color: #383838;
  font-size: 26px;
}
.combo button {
  width: 36px;
  display: flex;
  align-items: center;
  justify-content: center;
  border-left: 2px solid #525252;
}
.stroke-weight {
  width: 184px;
}
.combo .stepper {
  flex-direction: column;
  gap: 14px;
  border-left: 0;
  border-right: 2px solid #525252;
}
.opacity {
  width: 164px;
}
.width-profile {
  display: flex;
  align-items: center;
  width: 214px;
  color: #6a6a6a;
}
.width-profile span {
  width: 180px;
  height: 42px;
  background-color: #777;
}
.width-profile svg {
  margin-left: 10px;
}
.brush-drop {
  display: flex;
  align-items: center;
  gap: 10px;
  width: 211px;
  height: 42px;
  border: 2px solid #525252;
  border-radius: 5px;
}
.brush {
  display: flex;
  align-items: center;
  gap: 10px;
  width: 173px;
  height: 38px;
  padding-left: 10px;
  background-color: #e4e4e4;
  color: #000;
  font-size: 26px;
  font-weight: 500;
  line-height: 34px;
}
.brush i {
  width: 90px;
  height: 4px;
  background-color: #000;
}
.cell {
  height: 50px;
  padding: 0 14px;
  border-left: 2px solid #3c3c3c;
}
.wheel {
  width: 75px;
  padding-top: 4px;
}
.shape {
  width: 100px;
}
.icon-pair {
  display: flex;
  align-items: center;
  gap: 28px;
  width: 162px;
  padding-left: 18px;
  border-right: 2px solid #3c3c3c;
}
.icon-pair button, .edit-similar, .right-tools button {
  display: flex;
  align-items: center;
  gap: 12px;
}
.edit-similar {
  gap: 22px;
  margin-left: 18px;
}
.right-tools {
  display: flex;
  align-items: center;
  gap: 24px;
  margin-left: auto;
  padding-right: 4px;
}
.right-tools button:last-child {
  margin-left: 17px;
}
.dim {
  color: #6a6a6a;
}

/* workspace */
.workspace {
  position: relative;
  display: flex;
}
.tools-col {
  width: 80px;
  background: linear-gradient(to right, #fff, #d0d0d0);
}
.tools {
  border-left: 2px solid #303030;
  border-right: 2px solid #303030;
  background-color: #484848;
  box-shadow: 0 2px 16px rgba(0, 0, 0, .5);
}
.panel-head {
  display: flex;
  align-items: center;
  justify-content: space-between;
  height: 26px;
  padding: 0 10px;
  border-bottom: 2px solid #303030;
  background-color: #3c3c3c;
  color: #bdbdbd;
}
.grip-h {
  display: block;
  width: 38px;
  height: 8px;
  margin: 5px auto 0;
  background: repeating-linear-gradient(to right, #303030 0 2px, transparent 2px 4px);
}
.tool-list {
  padding-top: 22px;
}
.tool-list button {
  position: relative;
  display: block;
  width: 100%;
  height: 48px;
}
.tool-list svg {
  width: 40px;
  height: 36px;
  display: block;
  margin: 0 auto;
  overflow: visible;
}
.more::after {
  content: "";
  position: absolute;
  right: 12px;
  bottom: 2px;
  border-left: 7px solid transparent;
  border-bottom: 7px solid #bdbdbd;
}
.fill-tools {
  display: flex;
  flex-direction: column;
  align-items: center;
  margin: 4px 8px 0;
  padding: 8px 0 26px;
  border-top: 2px solid #3e3e3e;
}
.fill-tools button {
  display: flex;
  margin-top: 18px;
}
.fill-tools .screen {
  margin-top: 26px;
}
.fill-tools .dots {
  margin-top: 48px;
}
.swap-row {
  display: flex;
  justify-content: space-between;
  width: 64px;
}
.fill-tools .swap-row {
  padding-left: 2px;
}
.fill-stroke {
  position: relative;
  width: 60px;
  height: 60px;
  margin-top: 11px;
}
.fill-box {
  display: block;
  width: 40px;
  height: 40px;
  border: 2px solid #262626;
  background-color: #fff;
}
.stroke-box {
  position: absolute;
  right: 0;
  bottom: 0;
  width: 40px;
  height: 40px;
}
.color-modes {
  margin-top: 12px;
}

/* document window */
.document {
  position: relative;
  flex: 1;
  min-width: 0;
}
.doc-title {
  display: flex;
  align-items: center;
  height: 43px;
  padding-left: 16px;
  border-radius: 10px 0 0 0;
  background-color: #0f0f0f;
}
.lights {
  display: flex;
  gap: 16px;
}
.lights i {
  width: 24px;
  height: 24px;
  border-radius: 50%;
}
.close {
  background: radial-gradient(circle, #4c0a08 0 4px, #ff5f57 5px);
}
.min {
  background-color: #febc2e;
}
.max {
  background-color: #28c840;
}
.doc-title h2 {
  display: flex;
  align-items: center;
  justify-content: center;
  gap: 10px;
  flex: 1;
  margin: 0;
  padding-left: 400px;
  font-size: 26px;
  font-weight: 400;
  line-height: 36px;
  color: #dcdcdc;
  white-space: nowrap;
}
.pdf-tag {
  font-size: 8px;
  font-weight: 700;
  fill: #fff;
}
.ruler-row, .canvas-row {
  display: flex;
}
.ruler-corner, .ruler-y {
  flex: 0 0 32px;
  background-color: #262626;
}
.ruler-x {
  flex: 1;
  display: grid;
  grid-template-columns: 53px repeat(30, 1fr);
  height: 33px;
  padding-right: 75px;
  background-color: #262626;
  color: #a8a8a8;
}
.ruler-x span {
  padding-left: 4px;
  border-left: 2px solid #5c5c5c;
  background: linear-gradient(to right, transparent 10px, #5c5c5c 10px 12px, transparent 12px) left bottom / 20% 6px repeat-x;
  line-height: 38px;
}
.ruler-x span:first-child {
  padding-left: 0;
  border-left-width: 1px;
}
.ruler-y {
  display: grid;
  grid-template-rows: repeat(20, 1fr) 10px;
  padding-top: 3px;
  color: #a8a8a8;
}
.ruler-y span {
  display: flex;
  align-items: flex-end;
  justify-content: center;
  min-height: 0;
  padding: 0 8px 9px 0;
  border-top: 2px solid #5c5c5c;
  background: linear-gradient(transparent 10px, #5c5c5c 10px) right bottom / 6px 20% repeat-y;
}
.ruler-y .stub {
  padding: 0;
  background: none;
}
.ruler-y b {
  width: 16px;
  height: 40px;
  display: flex;
  align-items: flex-end;
  font-weight: 400;
  line-height: 20px;
  word-break: break-all;
}
.canvas {
  flex: 1;
  min-width: 0;
  display: block;
}
.pink {
  fill: none;
  stroke: #e4007f;
  stroke-width: 1.5;
}
.blue {
  fill: none;
  stroke: #1a9fe0;
  stroke-width: 1.5;
}
.green {
  fill: none;
  stroke: #00a050;
  stroke-width: 1.5;
}
.ink {
  fill: none;
  stroke: #231815;
}
.thick {
  stroke-width: 2;
}
.thin {
  stroke: #888;
}
.solid {
  fill: #231815;
  stroke: none;
}
.futura {
  font-family: Lato, "Noto Sans CJK TC", sans-serif;
  font-size: 21px;
  font-weight: 700;
  fill: #231815;
}
.cjk20 {
  font-size: 23px;
  font-weight: 500;
}
.cjk24 {
  font-family: "Noto Sans CJK TC", sans-serif;
  font-size: 24px;
}
.dim-text, .dim-small, .dim-pink {
  font-family: "Liberation Sans", sans-serif;
  font-size: 18px;
  fill: #231815;
}
.dim-small {
  font-size: 17px;
}
.dim-pink {
  font-size: 17px;
  fill: #e4007f;
}
.strong {
  stroke: #231815;
  stroke-width: 0.5;
}
.flange-cjk {
  font-family: "Noto Sans CJK TC", sans-serif;
  font-size: 16px;
  font-weight: 500;
  fill: #231815;
}
.flange {
  font-family: Lato, sans-serif;
  font-size: 14px;
  font-weight: 700;
  fill: #231815;
}
.bleed {
  font-family: "Noto Sans CJK TC", sans-serif;
  font-size: 25px;
  font-weight: 700;
  fill: #00a0e9;
}
.bleed-mm {
  font-size: 18px;
}
.curl-blue, .curl-green {
  fill: none;
  stroke: #00a0e9;
}
.curl-green {
  stroke: #00a050;
}
.face {
  font-size: 37px;
  fill: #00a0e9;
}
.face-cjk {
  font-family: "Noto Sans CJK TC", sans-serif;
  font-size: 37px;
  font-weight: 500;
  fill: #00a0e9;
}
.size-text {
  font-family: "Liberation Sans", sans-serif;
  font-size: 23px;
  fill: #231815;
}
.slitted {
  font-family: "Liberation Sans", sans-serif;
  font-size: 25px;
  fill: #231815;
}
.slit-size {
  font-family: "Noto Sans CJK TC", sans-serif;
  font-size: 20px;
  font-weight: 500;
  fill: #231815;
}
.hint {
  font-family: "Noto Sans CJK TC", sans-serif;
  font-size: 19px;
  font-weight: 700;
}
.hint-mm {
  font-size: 14px;
}
.green-text {
  fill: #00a050;
}
.red-text {
  fill: #e60012;
}

/* collapsed icon dock, floats over the artwork */
.dock {
  position: absolute;
  top: 0;
  right: 0;
  width: 77px;
  padding-bottom: 6px;
  border: 2px solid #303030;
  border-top: 0;
  background-color: #484848;
  box-shadow: 0 2px 10px rgba(0, 0, 0, .5);
}
.dock button {
  display: block;
  width: 100%;
  height: 56px;
}
.dock .grip-h + button {
  margin-top: 5px;
}
.dock svg {
  display: block;
}
.dock button svg {
  width: 36px;
  height: 36px;
  margin: 0 auto;
}
.glyph-a {
  font-size: 36px;
  font-weight: 500;
  fill: #bdbdbd;
}

/* right panels */
.panels {
  width: 500px;
  padding-left: 2px;
  border-left: 2px solid #303030;
  background-color: #484848;
}
.panel {
  border-bottom: 5px solid #303030;
}
.layers-panel {
  border-bottom: 0;
}
.tabs {
  display: flex;
  height: 54px;
  background-color: #3a3a3a;
}
.tabs button {
  padding: 0 17px 2px;
  border-right: 2px solid #303030;
  border-bottom: 2px solid #303030;
  font-size: 22px;
  font-weight: 700;
  color: #a0a0a0;
}
.tabs .active {
  display: flex;
  align-items: center;
  gap: 10px;
  padding: 0 13px 2px 8px;
  border-bottom-color: #484848;
  background-color: #484848;
  color: #f0f0f0;
}
.tabs .active svg {
  color: #888;
}
.tabs::after {
  content: "";
  flex: 1;
  border-bottom: 2px solid #303030;
}
.tight button {
  padding: 0 14px 2px;
}
.tight .active {
  padding: 0 16px 2px;
}
.color-panel {
  padding-bottom: 13px;
}
.color-body {
  display: flex;
  justify-content: space-between;
  padding: 12px 47px 0 8px;
}
.color-left .swap-row {
  width: 64px;
}
.last-color {
  display: flex;
  align-items: center;
  justify-content: space-between;
  width: 78px;
  margin-top: 73px;
  padding-left: 13px;
}
.last-color span {
  width: 30px;
  height: 30px;
  border: 2px solid #fff;
  outline: 2px solid #262626;
  background-color: #231815;
}
.sliders {
  display: grid;
  grid-template-columns: 22px 226px 70px;
  column-gap: 15px;
  row-gap: 24px;
  align-items: center;
  align-content: start;
  padding-top: 4px;
  font-size: 26px;
  font-weight: 500;
  color: #bdbdbd;
}
.sliders input[type=text], .hex-row input {
  width: 100%;
  height: 42px;
  border: 2px solid #555;
  border-radius: 5px;
  background-color: #383838;
}
.sliders input[type=range] {
  appearance: none;
  width: 100%;
  height: 12px;
  border: 2px solid #555;
}
.sliders input[type=range]::-webkit-slider-thumb {
  appearance: none;
  width: 0;
}
.hex-row {
  display: flex;
  align-items: center;
  margin-top: 10px;
  padding: 0 3px 0 8px;
}
.hex-row label {
  margin-left: auto;
  padding-right: 6px;
  font-weight: 600;
}
.hex-row input {
  width: 137px;
}
.spectrum {
  height: 46px;
  margin: 13px 4px 0 10px;
  border: 2px solid #262626;
  background:
    linear-gradient(#fff, rgba(255, 255, 255, 0) 45%, rgba(0, 0, 0, 0) 50%, #000),
    linear-gradient(to right, #f00, #ff0 17%, #0f0 34%, #0ff 50%, #00f 68%, #f0f 84%, #f00);
}
.blend-row {
  display: flex;
  align-items: center;
  gap: 10px;
  height: 64px;
  padding: 2px 10px 0 8px;
}
.select-wrap {
  position: relative;
  width: 180px;
}
.select-wrap select {
  appearance: none;
  display: block;
  width: 100%;
  height: 40px;
  padding-left: 12px;
  border: 2px solid #555;
  border-radius: 5px;
  background-color: #3c3c3c;
  color: #f0f0f0;
  font-size: 26px;
  font-weight: 500;
}
.select-wrap svg {
  position: absolute;
  right: 12px;
  top: 15px;
}
.blend-row label {
  font-size: 26px;
  font-weight: 500;
  line-height: 36px;
  color: #bdbdbd;
  white-space: nowrap;
}
.blend-row .combo {
  flex: 1;
  height: 40px;
  color: #f0f0f0;
}
.layers {
  width: 489px;
  margin: 14px 0 0 7px;
  border-collapse: collapse;
  border-top: 2px solid #545454;
  border-left: 2px solid #545454;
  font-size: 25px;
  font-weight: 500;
  table-layout: fixed;
}
.layers td {
  height: 42px;
  padding: 0;
  border-bottom: 2px solid #545454;
  border-right: 2px solid #545454;
  text-align: center;
}
.layers td:nth-child(1) { width: 42px; }
.layers td:nth-child(2) { width: 43px; }
.layers td:nth-child(3) { width: 12px; }
.layers td:nth-child(5) {
  position: relative;
  width: 53px;
  padding-right: 10px;
  border-right: 0;
}
.layers svg {
  vertical-align: middle;
}
.layer-name {
  display: flex;
  align-items: center;
  height: 40px;
  padding-left: 12px;
  line-height: 36px;
}
.layer-name svg {
  margin-right: 26px;
}
.open svg {
  margin-right: 20px;
}
.layer-name .thumb {
  width: 36px;
  height: 36px;
  margin-right: 10px;
  border: 2px solid #000;
  background-color: #fff;
}
.child .layer-name {
  padding-left: 94px;
  font-size: 26px;
}
.child .eye, .child .lock {
  color: #6e6e6e;
}
.eye {
  width: 24px;
  height: 16px;
  color: #bdbdbd;
}
.lock {
  width: 18px;
  height: 22px;
  color: #bdbdbd;
}
.ring {
  width: 18px;
  height: 18px;
}
.selected {
  background-color: #4a5e73;
}
.sel-mark {
  position: absolute;
  right: 0;
  top: 14px;
  width: 12px;
  height: 12px;
  border: 2px solid #000;
  border-right: 0;
  background-color: #4ff;
}
.bar {
  background-clip: content-box;
}
.layers .bar {
  padding: 2px;
}
.blue-bar { background-color: #4f80ff; }
.cyan-bar { background-color: #4fffff; }
.red-bar { background-color: #ff4f4f; }
.indigo-bar { background-color: #4f4fff; }
.green-bar { background-color: #4fff4f; }

/* callouts and captions */
.callouts {
  position: absolute;
  left: 0;
  top: 0;
  width: 100%;
  pointer-events: none;
}
.notes {
  display: flex;
  gap: 230px;
  padding: 74px 78px 70px;
  font-size: 48px;
  color: #3c42d0;
}
.notes p {
  margin: 0;
  line-height: 74px;
  white-space: nowrap;
}
```
